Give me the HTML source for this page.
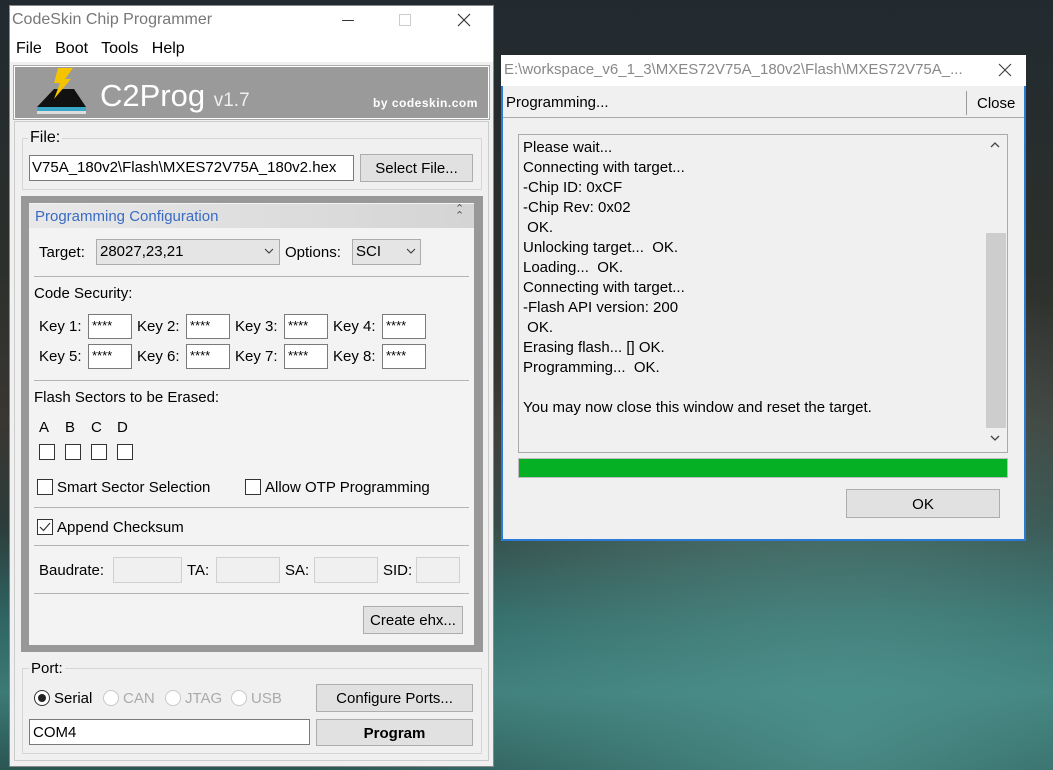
<!DOCTYPE html><html><head><style>
*{box-sizing:border-box}
body{margin:0;width:1053px;height:770px;overflow:hidden;position:relative;font-family:"Liberation Sans","Noto Sans CJK SC",sans-serif;font-size:15px;color:#000;
background:linear-gradient(180deg,#222a30 0%,#2c302c 35%,#3a3632 55%,#2c3c3a 68%,#2f6462 80%,#3c7a76 90%,#2a5552 100%)}
.a{position:absolute;white-space:nowrap}
.btn{position:absolute;background:#e1e1e1;border:1px solid #adadad;text-align:center;white-space:nowrap}
.in{position:absolute;background:#fff;border:1px solid #7a7a7a}
.ds{position:absolute;background:#f0f0f0;border:1px solid #d0d0d0}
.cb{position:absolute;width:16px;height:16px;border:1px solid #333;background:#fff}
.hr{position:absolute;height:1px;background:#b4b4b4;left:34px;width:435px}
.rb{position:absolute;width:16px;height:16px;border-radius:50%;border:1px solid #c8c8c8;background:#fff}
.cmb{position:absolute;background:#e5e5e5;border:1px solid #acacac;padding:3px 3px}
</style></head><body>
<div class="a" style="left:0;top:0;width:1053px;height:770px;background:radial-gradient(ellipse at 80% 95%,rgba(80,150,145,.8) 0,transparent 45%),radial-gradient(ellipse at 75% 60%,rgba(90,70,60,.5) 0,transparent 35%)"></div>

<!-- main window -->
<div class="a" style="left:9px;top:5px;width:485px;height:762px;background:#f0f0f0;border:1px solid #888"></div>
<div class="a" style="left:10px;top:6px;width:483px;height:56px;background:#fff"></div>
<div class="a" style="left:12px;top:11px;color:#777;font-size:16px">CodeSkin Chip Programmer</div>
<div class="a" style="left:342px;top:20px;width:12px;height:1px;background:#333"></div>
<div class="a" style="left:399px;top:14px;width:12px;height:12px;border:1px solid #ccc"></div>
<svg class="a" style="left:457px;top:13px" width="14" height="14"><path d="M1 1L13 13M13 1L1 13" stroke="#333" stroke-width="1.2"/></svg>
<div class="a" style="left:16px;top:40px;font-size:16px">File&nbsp;&nbsp; Boot&nbsp;&nbsp; Tools&nbsp;&nbsp; Help</div>
<div class="a" style="left:14px;top:66px;width:475px;height:53px;background:#9a9a9a;border:1px solid #fff;outline:1px solid #aaa"></div>
<svg class="a" style="left:34px;top:67px" width="56" height="50"><polygon points="3,40 20,22 40,22 52,40" fill="#111"/><rect x="3" y="40" width="49" height="4" fill="#3aa7c8"/><rect x="3" y="44" width="49" height="3" fill="#ddd"/><polygon points="24,1 39,1 31,12 37,12 20,32 26,16 20,16" fill="#f5c400"/></svg>
<div class="a" style="left:100px;top:78px;font-size:31px;color:#fff">C2Prog <span style="font-size:19px;color:#eee">v1.7</span></div>
<div class="a" style="left:373px;top:96px;font-size:12px;color:#fff;font-weight:bold;letter-spacing:.5px">by codeskin.com</div>
<div class="a" style="left:14px;top:121px;width:475px;height:640px;border:1px solid #ccc"></div>

<div class="a" style="left:22px;top:138px;width:460px;height:52px;border:1px solid #d6d6d6"></div>
<div class="a" style="left:28px;top:129px;background:#f0f0f0;padding:0 2px;font-size:16px">File:</div>
<div class="in" style="left:29px;top:155px;width:325px;height:26px;padding:3px 2px;font-size:15px;overflow:hidden">V75A_180v2\Flash\MXES72V75A_180v2.hex</div>
<div class="btn" style="left:360px;top:154px;width:113px;height:28px;padding-top:5px">Select File...</div>

<!-- config -->
<div class="a" style="left:21px;top:196px;width:462px;height:456px;background:#989898"></div>
<div class="a" style="left:29px;top:203px;width:445px;height:442px;background:#f3f3f3"></div>
<div class="a" style="left:29px;top:204px;width:445px;height:24px;background:linear-gradient(90deg,#e8e8e8,#d4d4d4)"></div>
<div class="a" style="left:35px;top:208px;color:#3a6bc4;font-size:15px">Programming Configuration</div>
<div class="a" style="left:455px;top:206px;font-size:11px;color:#555;line-height:7px">⌃<br>⌃</div>

<div class="a" style="left:39px;top:244px">Target:</div>
<div class="cmb" style="left:96px;top:239px;width:184px;height:26px">28027,23,21</div>
<svg class="a" style="left:264px;top:248px" width="10" height="6"><path d="M1 1L5 5L9 1" fill="none" stroke="#333"/></svg>
<div class="a" style="left:285px;top:244px">Options:</div>
<div class="cmb" style="left:352px;top:239px;width:69px;height:26px">SCI</div>
<svg class="a" style="left:406px;top:248px" width="10" height="6"><path d="M1 1L5 5L9 1" fill="none" stroke="#333"/></svg>
<div class="hr" style="top:276px"></div>
<div class="a" style="left:34px;top:285px">Code Security:</div>

<div class="a" style="left:39px;top:318px">Key 1:</div><div class="in" style="left:88px;top:314px;width:44px;height:25px;padding:3px 3px;font-size:13px">****</div>
<div class="a" style="left:137px;top:318px">Key 2:</div><div class="in" style="left:186px;top:314px;width:44px;height:25px;padding:3px 3px;font-size:13px">****</div>
<div class="a" style="left:235px;top:318px">Key 3:</div><div class="in" style="left:284px;top:314px;width:44px;height:25px;padding:3px 3px;font-size:13px">****</div>
<div class="a" style="left:333px;top:318px">Key 4:</div><div class="in" style="left:382px;top:314px;width:44px;height:25px;padding:3px 3px;font-size:13px">****</div>
<div class="a" style="left:39px;top:348px">Key 5:</div><div class="in" style="left:88px;top:344px;width:44px;height:25px;padding:3px 3px;font-size:13px">****</div>
<div class="a" style="left:137px;top:348px">Key 6:</div><div class="in" style="left:186px;top:344px;width:44px;height:25px;padding:3px 3px;font-size:13px">****</div>
<div class="a" style="left:235px;top:348px">Key 7:</div><div class="in" style="left:284px;top:344px;width:44px;height:25px;padding:3px 3px;font-size:13px">****</div>
<div class="a" style="left:333px;top:348px">Key 8:</div><div class="in" style="left:382px;top:344px;width:44px;height:25px;padding:3px 3px;font-size:13px">****</div>
<div class="hr" style="top:380px"></div>
<div class="a" style="left:34px;top:389px">Flash Sectors to be Erased:</div>
<div class="a" style="left:39px;top:419px">A</div><div class="a" style="left:65px;top:419px">B</div><div class="a" style="left:91px;top:419px">C</div><div class="a" style="left:117px;top:419px">D</div>
<div class="cb" style="left:39px;top:444px"></div><div class="cb" style="left:65px;top:444px"></div><div class="cb" style="left:91px;top:444px"></div><div class="cb" style="left:117px;top:444px"></div>
<div class="cb" style="left:37px;top:479px"></div><div class="a" style="left:57px;top:479px">Smart Sector Selection</div>
<div class="cb" style="left:245px;top:479px"></div><div class="a" style="left:265px;top:479px">Allow OTP Programming</div>
<div class="hr" style="top:507px"></div>
<div class="cb" style="left:37px;top:519px"></div>
<svg class="a" style="left:39px;top:521px" width="12" height="12"><path d="M1 6L4.5 9.5L11 2" fill="none" stroke="#333" stroke-width="1.2"/></svg>
<div class="a" style="left:57px;top:519px">Append Checksum</div>
<div class="hr" style="top:545px"></div>
<div class="a" style="left:39px;top:562px">Baudrate:</div><div class="ds" style="left:113px;top:557px;width:69px;height:26px"></div>
<div class="a" style="left:187px;top:562px">TA:</div><div class="ds" style="left:216px;top:557px;width:64px;height:26px"></div>
<div class="a" style="left:285px;top:562px">SA:</div><div class="ds" style="left:314px;top:557px;width:64px;height:26px"></div>
<div class="a" style="left:383px;top:562px">SID:</div><div class="ds" style="left:416px;top:557px;width:44px;height:26px"></div>
<div class="hr" style="top:593px"></div>
<div class="btn" style="left:363px;top:606px;width:100px;height:28px;padding-top:5px">Create ehx...</div>

<!-- port -->
<div class="a" style="left:22px;top:668px;width:460px;height:86px;border:1px solid #d6d6d6"></div>
<div class="a" style="left:29px;top:660px;background:#f0f0f0;padding:0 2px">Port:</div>
<div class="rb" style="left:34px;top:690px;border-color:#333"></div><div class="a" style="left:38px;top:694px;width:8px;height:8px;border-radius:50%;background:#222"></div>
<div class="a" style="left:54px;top:690px">Serial</div>
<div class="rb" style="left:103px;top:690px"></div><div class="a" style="left:123px;top:690px;color:#aaa">CAN</div>
<div class="rb" style="left:165px;top:690px"></div><div class="a" style="left:185px;top:690px;color:#aaa">JTAG</div>
<div class="rb" style="left:231px;top:690px"></div><div class="a" style="left:251px;top:690px;color:#aaa">USB</div>
<div class="btn" style="left:316px;top:684px;width:157px;height:28px;padding-top:5px">Configure Ports...</div>
<div class="in" style="left:29px;top:719px;width:281px;height:26px;padding:4px 3px">COM4</div>
<div class="btn" style="left:316px;top:719px;width:157px;height:27px;padding-top:5px;font-weight:bold">Program</div>

<!-- dialog -->
<div class="a" style="left:501px;top:55px;width:525px;height:486px;background:#f0f0f0;border:2px solid #2b7bd4"></div>
<div class="a" style="left:501px;top:55px;width:525px;height:31px;background:#fff"></div>
<div class="a" style="left:504px;top:61px;color:#888;font-size:15px">E:\workspace_v6_1_3\MXES72V75A_180v2\Flash\MXES72V75A_...</div>
<svg class="a" style="left:998px;top:63px" width="14" height="14"><path d="M1 1L13 13M13 1L1 13" stroke="#444" stroke-width="1.2"/></svg>
<div class="a" style="left:506px;top:94px">Programming...</div>
<div class="a" style="left:966px;top:91px;width:1px;height:24px;background:#999"></div>
<div class="a" style="left:977px;top:95px">Close</div>
<div class="a" style="left:503px;top:117px;width:521px;height:1px;background:#aaa"></div>
<div class="a" style="left:518px;top:134px;width:490px;height:319px;border:1px solid #aaa;background:#f0f0f0"></div>
<div class="a" style="left:523px;top:138px;line-height:20px;font-size:15px">Please wait...<br>Connecting with target...<br>-Chip ID: 0xCF<br>-Chip Rev: 0x02<br>&nbsp;OK.<br>Unlocking target...&nbsp; OK.<br>Loading...&nbsp; OK.<br>Connecting with target...<br>-Flash API version: 200<br>&nbsp;OK.<br>Erasing flash... [] OK.<br>Programming...&nbsp; OK.<br><br>You may now close this window and reset the target.</div>
<svg class="a" style="left:990px;top:141px" width="10" height="7"><path d="M1 6L5 2L9 6" fill="none" stroke="#444" stroke-width="1.3"/></svg>
<div class="a" style="left:986px;top:233px;width:20px;height:195px;background:#cdcdcd"></div>
<svg class="a" style="left:990px;top:435px" width="10" height="7"><path d="M1 1L5 5L9 1" fill="none" stroke="#444" stroke-width="1.3"/></svg>
<div class="a" style="left:518px;top:458px;width:490px;height:20px;background:#06b025;border:1px solid #bcbcbc"></div>
<div class="btn" style="left:846px;top:489px;width:154px;height:29px;padding-top:6px">OK</div>
</body></html>
